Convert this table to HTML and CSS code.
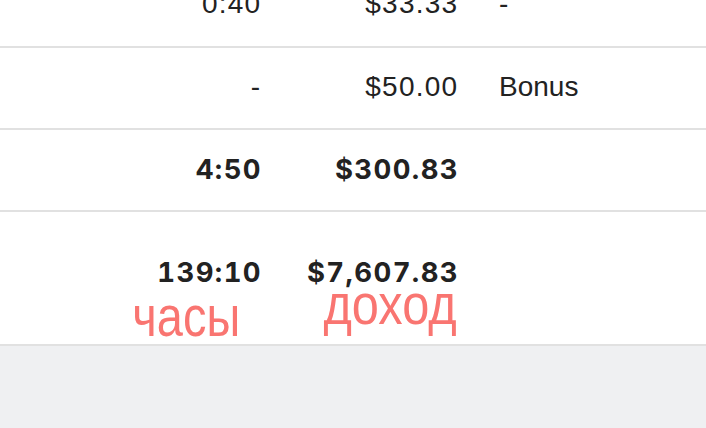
FILE: index.html
```html
<!DOCTYPE html>
<html lang="ru">
<head>
<meta charset="utf-8">
<link rel="stylesheet" href="styles.css">
</head>
<body>
<div class="table">
  <div class="row first">
    <div class="cell hours">0:40</div>
    <div class="cell amount">$33.33</div>
    <div class="cell note">-</div>
  </div>
  <div class="row">
    <div class="cell hours">-</div>
    <div class="cell amount">$50.00</div>
    <div class="cell note">Bonus</div>
  </div>
  <div class="row subtotal">
    <div class="cell hours">4:50</div>
    <div class="cell amount">$300.83</div>
    <div class="cell note"></div>
  </div>
  <div class="row total">
    <div class="cell hours">
      <span class="value">139:10</span>
      <span class="label label-hours">часы</span>
    </div>
    <div class="cell amount">
      <span class="value">$7,607.83</span>
      <span class="label label-income">доход</span>
    </div>
    <div class="cell note"></div>
  </div>
</div>
</body>
</html>
```
FILE: styles.css
```css
html, body {
  margin: 0;
  padding: 0;
}
body {
  background: #eff0f2;
  font-family: "Liberation Sans", Arial, sans-serif;
  color: #222222;
  height: 428px;
  overflow: hidden;
}
.table {
  background: #ffffff;
  margin-top: -35px;
}
.row {
  display: grid;
  grid-template-columns: 260px 197px 1fr;
  height: 80px;
  align-items: center;
  border-bottom: 2px solid #e1e1e1;
  font-size: 28px;
  line-height: 32px;
}
.row.first {
  height: 81px;
}
.cell {
  padding-bottom: 3px;
}
.cell.hours, .cell.amount {
  text-align: right;
  letter-spacing: 1.2px;
  margin-right: -1.2px;
}
.cell.note {
  padding-left: 42px;
}
.subtotal .hours, .subtotal .amount,
.total .value {
  font-family: Inter, "Liberation Sans", sans-serif;
  font-weight: bold;
  font-size: 27.5px;
  font-variant-numeric: tabular-nums;
  letter-spacing: 1.4px;
  margin-right: -2px;
}
.total {
  height: 132px;
  align-items: start;
}
.total .cell {
  display: flex;
  flex-direction: column;
  align-items: flex-end;
  padding-top: 46px;
  padding-bottom: 0;
  letter-spacing: 0;
  margin-right: 0;
}
.total .value {
  display: block;
  line-height: 28px;
}
.label {
  display: block;
  color: #f97571;
  font-weight: normal;
  letter-spacing: 0;
  font-size: 58px;
  line-height: 58px;
  transform: scaleX(0.81);
  transform-origin: right center;
}
.label-hours {
  margin-right: 20px;
  margin-top: 1px;
}
.label-income {
  margin-top: -11px;
  transform: scaleX(0.84);
}
```
